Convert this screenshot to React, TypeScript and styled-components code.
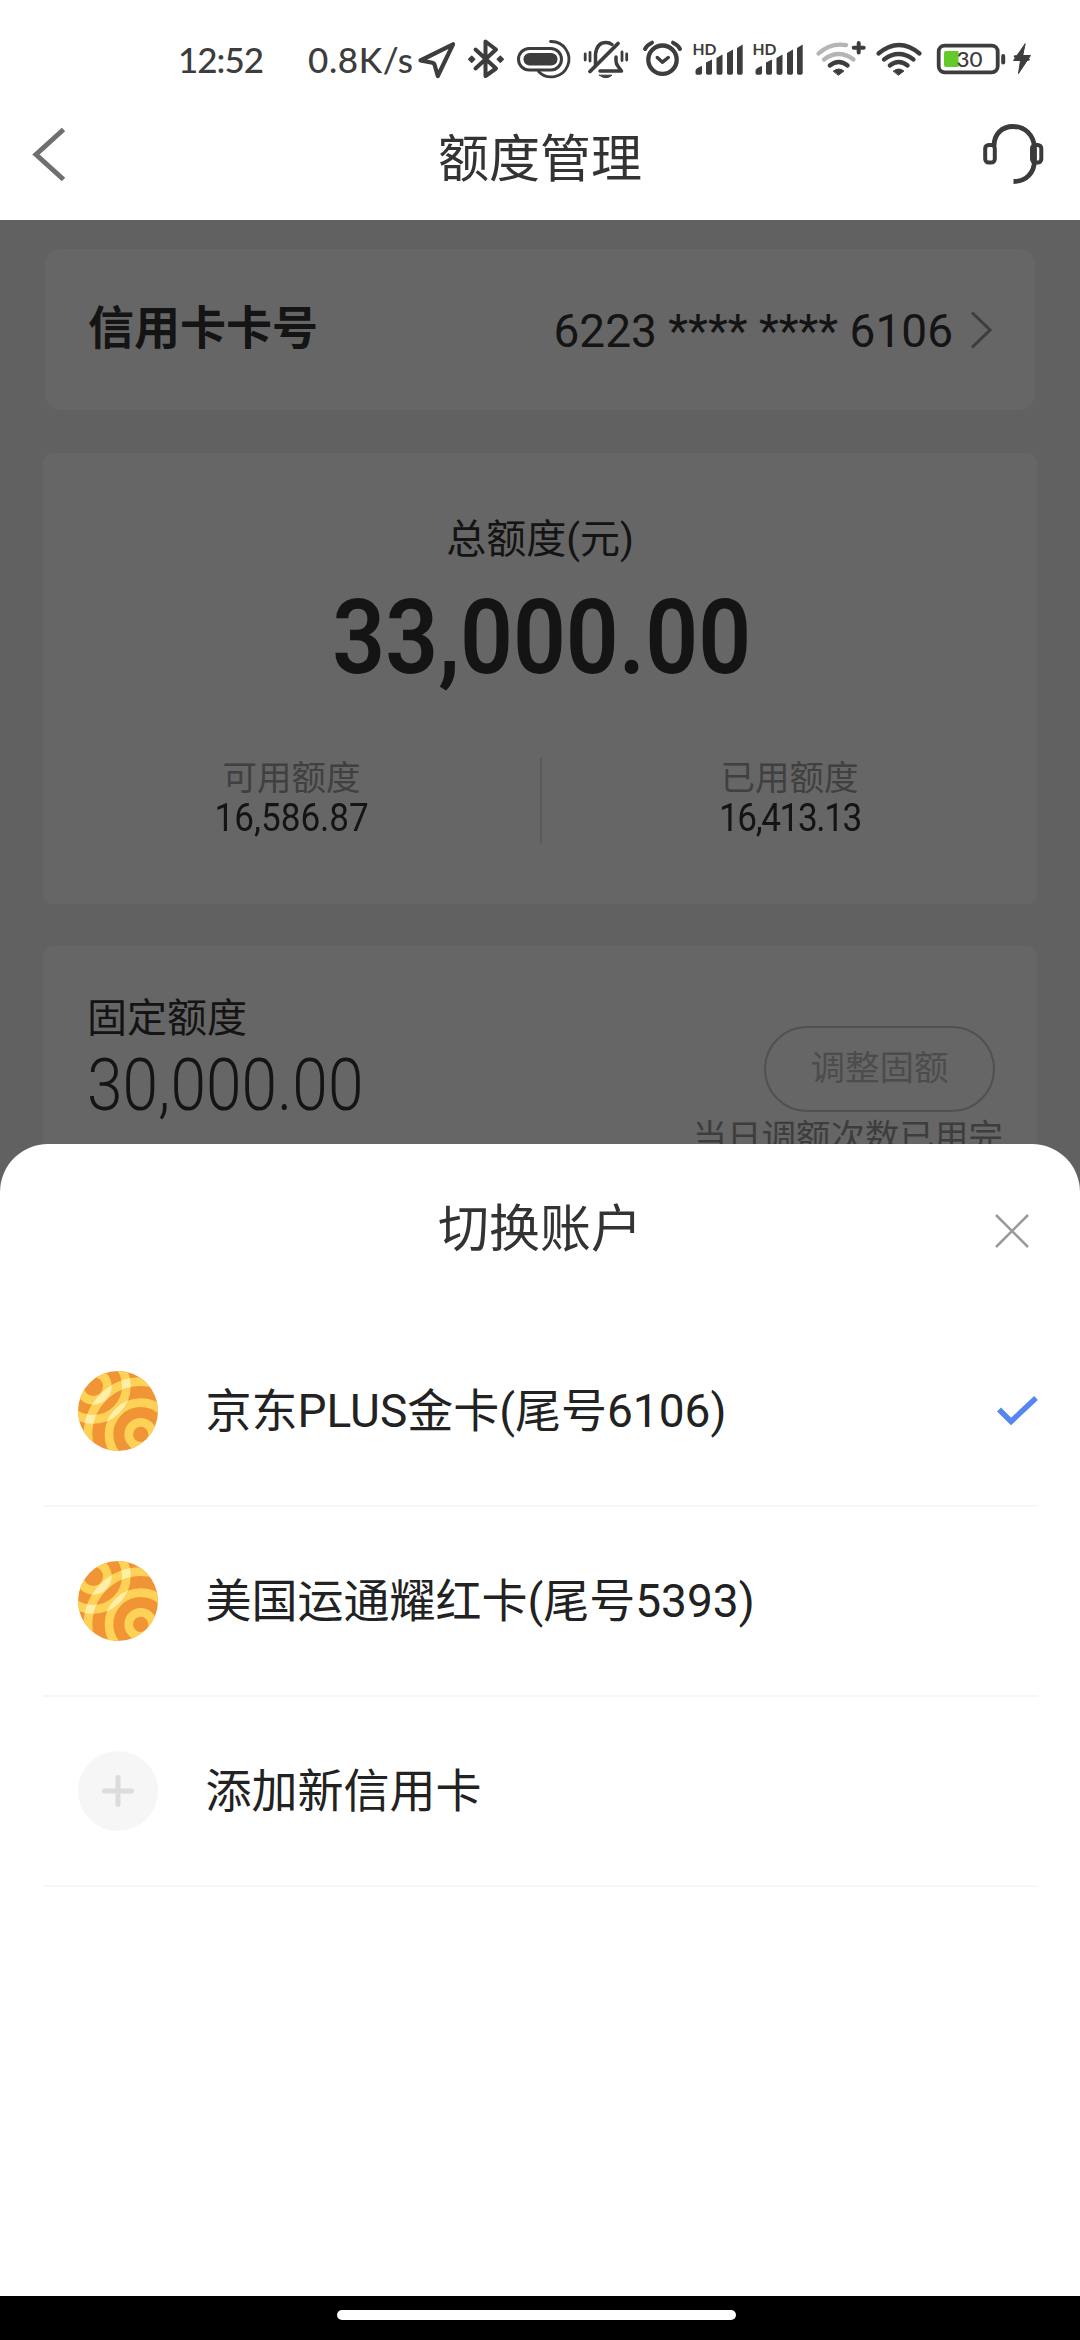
import React, { useId } from 'react';
import styled, { createGlobalStyle } from 'styled-components';

const GlobalStyle = createGlobalStyle`
  html, body { margin: 0; padding: 0; background: #fff; }
  * { box-sizing: border-box; }
`;

const sans = `Roboto, "Noto Sans CJK SC", sans-serif`;

const Screen = styled.div`
  position: relative;
  width: 1080px;
  height: 2340px;
  overflow: hidden;
  background: #f3f3f3;
  font-family: ${sans};
  color: #333;
  display: flex;
  flex-direction: column;
`;

/* ---------- status bar ---------- */
const StatusBar = styled.div`
  height: 100px;
  display: flex;
  background: #fff;
  padding-left: 178px;
  flex: none;
`;

const StatusText = styled.span<{ $w: number; $spacing?: number }>`
  width: ${(p) => p.$w}px;
  flex: none;
  font: 500 35px/118px Lato, sans-serif;
  letter-spacing: ${(p) => p.$spacing ?? 0}px;
  color: #3d3d3d;
  white-space: nowrap;
`;

const StatusSvg = styled.svg<{ $gap: number }>`
  display: block;
  flex: none;
  height: 100px;
  margin-left: ${(p) => p.$gap}px;
  overflow: visible;
`;

const dark = '#3d3d3d';

function StatusIcon({ x, w, gap, children }: { x: number; w: number; gap: number; children: React.ReactNode }) {
  return (
    <StatusSvg $gap={gap} width={w} height={100} viewBox={`${x} 0 ${w} 100`} fill="none" stroke={dark} strokeLinecap="round" strokeLinejoin="round">
      {children}
    </StatusSvg>
  );
}

const Badge = styled.text`
  font: 700 16px Lato, sans-serif;
  fill: ${dark};
  stroke: none;
`;

const BatteryText = styled.text`
  font: 500 22px Lato, sans-serif;
  fill: ${dark};
  stroke: none;
`;

const Signal = ({ gap }: { gap: number }) => (
  <StatusIcon x={693} w={50} gap={gap}>
    <Badge x="692.5" y="55" textLength="24" lengthAdjust="spacingAndGlyphs">HD</Badge>
    <g fill={dark} stroke="none">
      <path d="M695.5 73v-2q0-3 6.500-5v7q0 1.700-2 1.700h-3q-1.500 0-1.500-1.700z" />
      <path d="M706 73V62.500l6-3V73q0 1.700-1.700 1.700h-2.600q-1.700 0-1.700-1.700z" />
      <path d="M716.500 73V58l6-3.500V73q0 1.700-1.700 1.700h-2.600q-1.700 0-1.700-1.700z" />
      <path d="M727 73V53l6-3.500V73q0 1.700-1.700 1.700h-2.600q-1.700 0-1.700-1.700z" />
      <path d="M737 73V48l5.700-3.500V73q0 1.700-1.700 1.700h-2.300q-1.700 0-1.700-1.700z" />
    </g>
  </StatusIcon>
);

function Status() {
  return (
    <StatusBar>
      <StatusText $w={130} $spacing={-1}>12:52</StatusText>
      <StatusText $w={108} $spacing={0.6}>0.8K/s</StatusText>
      <StatusIcon x={418} w={38} gap={2}>
        <path d="M420.500 60.500L453 44.300L437.800 76L434.500 64.500Q434 63 432.500 62.700Z" strokeWidth="4.200" />
      </StatusIcon>
      <StatusIcon x={468} w={36} gap={12}>
        <path d="M475.500 49.500L496 68.500L485.500 76V41.500L496 49.500L475.500 68.500" strokeWidth="4" />
        <path d="M471.700 56.200l3 3-3 3-3-3zM500.300 56.200l3 3-3 3-3-3z" fill={dark} strokeWidth="1.500" />
      </StatusIcon>
      <StatusIcon x={517} w={53} gap={13}>
        <rect x="518.500" y="48.500" width="43" height="21.500" rx="10.700" strokeWidth="3" />
        <rect x="523.500" y="53" width="34" height="12.500" rx="6.200" fill={dark} stroke="none" />
        <path d="M550.500 41.500A17.700 17.700 0 1 1 538.500 71.500" strokeWidth="2.800" />
      </StatusIcon>
      <StatusIcon x={583} w={45} gap={13}>
        <path d="M595.500 66V54Q597 42.500 606 42.500Q609.500 42.500 612 44.500M616 57V61Q616 64 618.500 67L621.500 71H600" strokeWidth="3.500" />
        <path d="M590 71.500L618 43.500" strokeWidth="3.800" />
        <path d="M599.500 75.200h12.500q-6.200 5-12.500 0z" fill={dark} strokeWidth="1" />
        <path d="M585.200 54v6M590 52.500v8.500M622 52v8.500M626.700 54v6" strokeWidth="2.800" />
      </StatusIcon>
      <StatusIcon x={643} w={39} gap={15}>
        <circle cx="662.500" cy="59.700" r="14.200" strokeWidth="4.300" />
        <path d="M657.300 57.500l5.200 4.700 5.800-4.700" strokeWidth="3.500" />
        <path d="M645 49q2-4 7-6.300M680 49q-2-4-7-6.300" strokeWidth="4" />
      </StatusIcon>
      <Signal gap={11} />
      <Signal gap={10} />
      <StatusIcon x={816} w={50} gap={13}>
        <path d="M818.500 53.500Q831 42.500 846 45.200" stroke="#b5b5b5" strokeWidth="4.300" />
        <path d="M824 59.500Q838.700 48.500 853.500 59.500" stroke="#b5b5b5" strokeWidth="4.300" />
        <path d="M829.800 65.500Q838.700 58.500 847.600 65.500" strokeWidth="4.300" />
        <path d="M833.500 71q5.200-4 10.400 0l-5.200 4z" fill={dark} strokeWidth="1" />
        <path d="M858.700 43v9.500M853.700 47.700h10" strokeWidth="4" />
      </StatusIcon>
      <StatusIcon x={876} w={46} gap={10}>
        <path d="M878.500 53.500Q899 36.500 919.500 53.500M884 59.500Q898.700 48.500 913.500 59.500M889.800 65.500Q898.700 58.500 907.600 65.500" strokeWidth="4.300" />
        <path d="M893.500 71q5.200-4 10.400 0l-5.200 4z" fill={dark} strokeWidth="1" />
      </StatusIcon>
      <StatusIcon x={937} w={94} gap={15}>
        <rect x="938.700" y="45.700" width="59" height="26.600" rx="6" strokeWidth="3.800" />
        <path d="M946 51h12.500v16H946q-2 0-2-2V53q0-2 2-2z" fill="#63cb29" stroke="none" />
        <BatteryText x="956.500" y="67" textLength="26" lengthAdjust="spacingAndGlyphs">30</BatteryText>
        <path d="M1003.200 56v6.500" strokeWidth="4" />
        <path d="M1025 44L1013.500 60.500H1020.500L1018.500 73.500L1030.500 55.500H1023Z" fill={dark} strokeWidth="1" />
        <path d="M1015 56.500h9M1020 59.500h8.500" strokeWidth="2.500" />
      </StatusIcon>
    </StatusBar>
  );
}

/* ---------- header ---------- */
const Header = styled.header`
  height: 120px;
  flex: none;
  background: #fff;
  display: grid;
  grid-template-columns: 100px 1fr 100px;
  align-items: center;
`;

const HeaderTitle = styled.h1`
  margin: 0;
  text-align: center;
  font-weight: 400;
  font-size: 51px;
  line-height: 120px;
`;

const Glyph = styled.svg`
  display: block;
  flex: none;
`;

/* ---------- page content ---------- */
const Content = styled.main`
  position: relative;
  flex: 1;
  display: flex;
  flex-direction: column;
  align-items: center;
  padding-top: 29px;
`;

const CardNumberCard = styled.section`
  width: 990px;
  height: 161px;
  flex: none;
  border-radius: 16px;
  background: #fff;
  display: flex;
  align-items: center;
  padding: 0 43px;
`;

const CardLabel = styled.span`
  flex: 1;
  font-weight: 700;
  font-size: 46px;
  line-height: 60px;
  margin-top: -3px;
`;

const CardNumber = styled.span`
  font-size: 46px;
  line-height: 60px;
  margin: 2px 17px 0 0;
`;

const TotalCard = styled.section`
  width: 994px;
  height: 451px;
  flex: none;
  margin-top: 43px;
  border-radius: 10px;
  background: #fff;
  padding-top: 59px;
  display: flex;
  flex-direction: column;
  align-items: center;
`;

const TotalLabel = styled.div`
  font-size: 40px;
  line-height: 56px;
`;

const Amount = styled.div<{ $size: number; $line: number; $weight: number; $scale: number; $spacing?: number; $left?: boolean }>`
  font-size: ${(p) => p.$size}px;
  line-height: ${(p) => p.$line}px;
  font-weight: ${(p) => p.$weight};
  letter-spacing: ${(p) => p.$spacing ?? 0}px;
  transform: scaleX(${(p) => p.$scale});
  transform-origin: ${(p) => (p.$left ? 'left' : 'center')};
  white-space: nowrap;
`;

const TotalAmount = styled(Amount)`
  margin: 15px 0 0 4px;
`;

const Split = styled.div`
  width: 100%;
  height: 86px;
  margin-top: 65px;
  display: grid;
  grid-template-columns: 497px 2px 495px;
`;

const Divider = styled.i`
  background: #e2e2e2;
`;

const SplitCell = styled.div`
  display: flex;
  flex-direction: column;
  align-items: center;
`;

const SplitLabel = styled.div`
  font-size: 34.500px;
  line-height: 40px;
  color: #a0a0a0;
`;

const FixedCard = styled.section`
  width: 994px;
  height: 400px;
  flex: none;
  margin-top: 42px;
  border-radius: 10px;
  background: #fff;
  display: flex;
  justify-content: space-between;
  padding: 0 34px 0 44px;
`;

const FixedInfo = styled.div`
  padding-top: 48px;
`;

const FixedLabel = styled.div`
  font-size: 40px;
  line-height: 50px;
  margin-bottom: 2px;
`;

const FixedActions = styled.div`
  padding-top: 80px;
  display: flex;
  flex-direction: column;
  align-items: flex-end;
`;

const AdjustButton = styled.button`
  width: 231px;
  height: 86px;
  margin: 0 8px 5px 0;
  border: 2px solid #c8c8c8;
  border-radius: 43px;
  background: transparent;
  color: #bdbdbd;
  font: 400 34.500px/76px ${sans};
  padding: 0 0 2px;
`;

const Note = styled.div`
  font-size: 34.500px;
  line-height: 40px;
  color: #999;
`;

const Mask = styled.div`
  position: absolute;
  inset: 0;
  background: rgba(0, 0, 0, 0.6);
`;

/* ---------- bottom sheet ---------- */
const Sheet = styled.section`
  position: absolute;
  left: 0;
  right: 0;
  bottom: 44px;
  height: 1152px;
  border-radius: 48px 48px 0 0;
  background: #fff;
`;

const SheetHeader = styled.div`
  height: 173px;
  padding-top: 3px;
  display: grid;
  grid-template-columns: 100px 1fr 100px;
`;

const SheetTitle = styled.h2`
  margin: 0;
  text-align: center;
  font-weight: 400;
  font-size: 51px;
  line-height: 166px;
`;

const CloseButton = styled.button`
  border: 0;
  background: none;
  padding: 67px 0 0 15px;
  display: flex;
  align-items: flex-start;
`;

const Row = styled.div`
  height: 190px;
  margin: 0 42px 0 43px;
  padding: 0 0 0 35px;
  border-bottom: 2px solid #f7f7f7;
  display: flex;
  align-items: center;
  color: #222;
`;

const RowText = styled.span`
  flex: 1;
  margin: -1px 0 0 47.500px;
  font-size: 46px;
  line-height: 60px;
  white-space: nowrap;
`;

const AddCircle = styled.span`
  width: 80px;
  height: 80px;
  border-radius: 50%;
  background: #f6f6f6;
  display: flex;
  align-items: center;
  justify-content: center;
`;

const NavBar = styled.footer`
  position: absolute;
  left: 0;
  right: 0;
  bottom: 0;
  height: 44px;
  background: #000;
  display: flex;
  justify-content: center;
  padding: 14px 7px 0 0;
`;

const HomeIndicator = styled.i`
  width: 399px;
  height: 10px;
  border-radius: 5px;
  background: #fff;
`;

function BankLogo() {
  const id = useId();
  const upper = (color: string) => (
    <g stroke={color} strokeWidth="26">
      <circle cx="130" cy="143" r="42" />
      <circle cx="130" cy="143" r="99" />
    </g>
  );
  const lower = (color: string) => (
    <g stroke={color} strokeWidth="26">
      <circle cx="272" cy="287" r="36" />
      <circle cx="272" cy="287" r="95" />
      <circle cx="272" cy="287" r="158" />
    </g>
  );
  return (
    <Glyph width="80" height="80" viewBox="84 97 240 240" fill="none">
      <clipPath id={`${id}c`}><circle cx="204" cy="217" r="120" /></clipPath>
      <mask id={`${id}m`} maskUnits="userSpaceOnUse" x="84" y="97" width="240" height="240">{lower('#fff')}</mask>
      <g clipPath={`url(#${id}c)`}>
        <rect x="84" y="97" width="240" height="240" fill="#f09436" />
        {lower('#fdd256')}
        {upper('#fdd256')}
        <g mask={`url(#${id}m)`}>{upper('#fdeea8')}</g>
      </g>
    </Glyph>
  );
}

const accounts = [
  { name: '京东PLUS金卡(尾号6106)', selected: true },
  { name: '美国运通耀红卡(尾号5393)', selected: false },
];

export default function App() {
  return (
    <Screen>
      <GlobalStyle />
      <Status />
      <Header>
        <Glyph width="100" height="120" viewBox="0 100 100 120" fill="none" stroke="#6f6f6f" strokeWidth="5">
          <path d="M63.500 129.500L36 154.500L63.500 179.500" />
        </Glyph>
        <HeaderTitle>额度管理</HeaderTitle>
        <Glyph width="100" height="120" viewBox="980 100 100 120" fill="none" stroke="#3b3b3b" strokeWidth="4.800">
          <path d="M994 146C994 134 1002 126.500 1013 126.500C1025 126.500 1034 135 1034.500 148V160C1034.500 173 1026 181.500 1013.500 181.500" />
          <rect x="985.200" y="145" width="9.600" height="17.500" rx="3.500" strokeWidth="4" />
          <rect x="1032" y="145" width="9.300" height="17.500" rx="3.500" strokeWidth="4" />
        </Glyph>
      </Header>

      <Content>
        <CardNumberCard>
          <CardLabel>信用卡卡号</CardLabel>
          <CardNumber>6223 **** **** 6106</CardNumber>
          <Glyph width="22" height="38" viewBox="0 0 22 38" fill="none" stroke="#999" strokeWidth="3">
            <path d="M2 1.500L20 19L2 36.500" />
          </Glyph>
        </CardNumberCard>

        <TotalCard>
          <TotalLabel>总额度(元)</TotalLabel>
          <TotalAmount $size={103} $line={110} $weight={600} $scale={0.9}>33,000.00</TotalAmount>
          <Split>
            <SplitCell>
              <SplitLabel>可用额度</SplitLabel>
              <Amount $size={39} $line={40} $weight={400} $scale={0.9}>16,586.87</Amount>
            </SplitCell>
            <Divider />
            <SplitCell>
              <SplitLabel>已用额度</SplitLabel>
              <Amount $size={39} $line={40} $weight={400} $scale={0.9} $spacing={-1.5}>16,413.13</Amount>
            </SplitCell>
          </Split>
        </TotalCard>

        <FixedCard>
          <FixedInfo>
            <FixedLabel>固定额度</FixedLabel>
            <Amount $size={72} $line={80} $weight={350} $scale={0.89} $left>30,000.00</Amount>
          </FixedInfo>
          <FixedActions>
            <AdjustButton>调整固额</AdjustButton>
            <Note>当日调额次数已用完</Note>
          </FixedActions>
        </FixedCard>
        <Mask />
      </Content>

      <Sheet>
        <SheetHeader>
          <span />
          <SheetTitle>切换账户</SheetTitle>
          <CloseButton aria-label="关闭">
            <Glyph width="34" height="34" viewBox="0 0 34 34" stroke="#9a9a9a" strokeWidth="2.500">
              <path d="M1 1L33 33M33 1L1 33" />
            </Glyph>
          </CloseButton>
        </SheetHeader>
        {accounts.map((a) => (
          <Row key={a.name}>
            <BankLogo />
            <RowText>{a.name}</RowText>
            {a.selected && (
              <Glyph width="42" height="32" viewBox="0 0 42 32" fill="none" stroke="#5687f0" strokeWidth="5.500">
                <path d="M3 14.500L15 26.500L40 3" />
              </Glyph>
            )}
          </Row>
        ))}
        <Row>
          <AddCircle>
            <Glyph width="32" height="32" viewBox="0 0 32 32" stroke="#dcdcdc" strokeWidth="5" strokeLinecap="round">
              <path d="M16 2.500V29.500M2.500 16H29.500" />
            </Glyph>
          </AddCircle>
          <RowText>添加新信用卡</RowText>
        </Row>
      </Sheet>

      <NavBar>
        <HomeIndicator />
      </NavBar>
    </Screen>
  );
}
